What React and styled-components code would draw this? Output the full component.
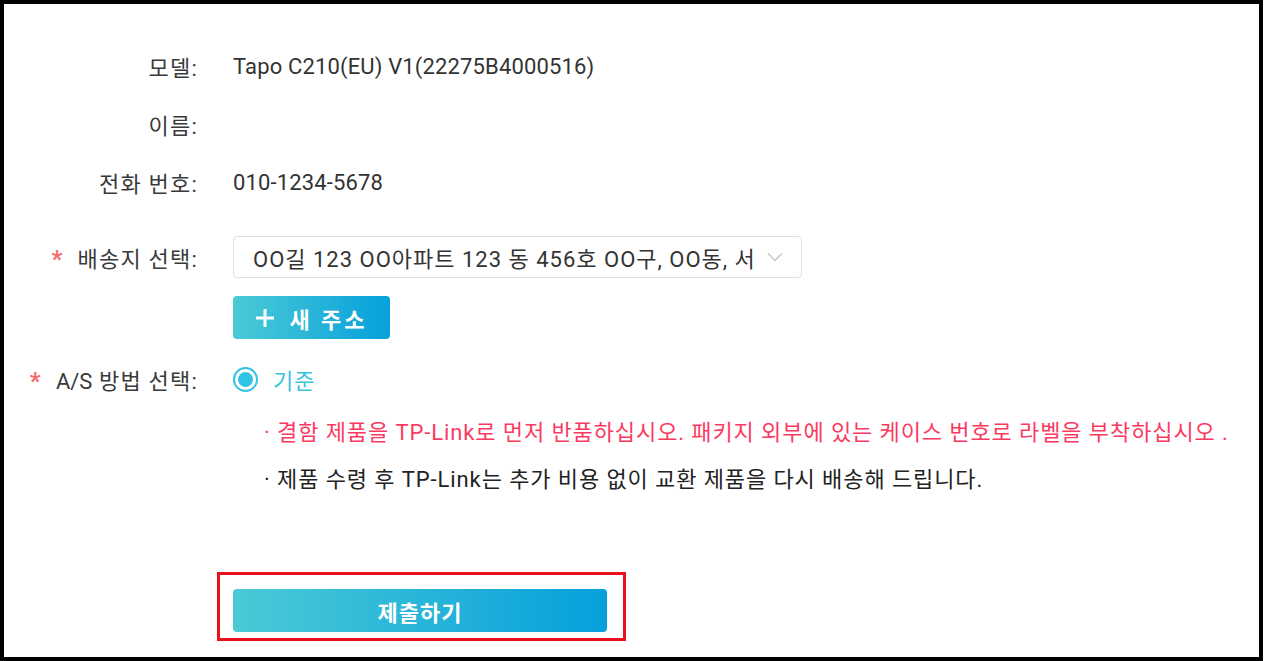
import React from "react";
import styled, { createGlobalStyle } from "styled-components";

const GlobalStyle = createGlobalStyle`
  html, body {
    margin: 0;
    padding: 0;
    background: #ffffff;
  }
  body {
    font-family: Roboto, "Noto Sans CJK KR", sans-serif;
    color: #333333;
  }
  * {
    box-sizing: border-box;
  }
`;

const Frame = styled.div`
  width: 1263px;
  height: 661px;
  border: 4px solid #000000;
  padding-top: 42px;
  display: flex;
  flex-direction: column;
`;

const Row = styled.div`
  display: flex;
  align-items: center;
  min-height: ${(props) => props.height || 40}px;
  margin-top: ${(props) => props.gap || 0}px;
`;

const Label = styled.div`
  width: 194px;
  flex-shrink: 0;
  text-align: right;
  font-size: 22px;
  letter-spacing: 1.2px;
  color: #3a3a3a;
  white-space: nowrap;
`;

const Latin = styled.span`
  letter-spacing: 0;
`;

const Star = styled.span`
  color: #f56c6c;
  font-size: 24px;
  font-weight: 700;
  margin-right: 14px;
`;

const Value = styled.div`
  margin-left: 35px;
  font-size: 22px;
  letter-spacing: 0.15px;
  color: #333333;
  display: flex;
  align-items: center;
`;

const Select = styled.div`
  width: 569px;
  height: 42px;
  border: 1px solid #dcdfe6;
  border-radius: 4px;
  display: flex;
  align-items: center;
  justify-content: space-between;
  padding: 0 18px 0 19px;
  font-size: 22px;
  letter-spacing: 1px;
  color: #333333;
  white-space: nowrap;
`;

const GradientButton = styled.button`
  width: ${(props) => props.width}px;
  height: 43px;
  border: none;
  border-radius: 4px;
  background: linear-gradient(90deg, #4bcad6 0%, #06a0dc 100%);
  color: #ffffff;
  font-family: Roboto, "Noto Sans CJK KR", sans-serif;
  font-size: 22px;
  font-weight: 700;
  display: flex;
  align-items: center;
  justify-content: center;
  gap: 14px;
  letter-spacing: ${(props) => props.spacing || 0}px;
  padding: 0;
`;

const Radio = styled.span`
  width: 25px;
  height: 25px;
  border-radius: 50%;
  border: 2px solid #2fc4e4;
  display: flex;
  align-items: center;
  justify-content: center;

  &::after {
    content: "";
    width: 15px;
    height: 15px;
    border-radius: 50%;
    background: #2fc4e4;
  }
`;

const RadioText = styled.span`
  margin-left: 15px;
  color: #39c2de;
  font-size: 22px;
  letter-spacing: 1px;
`;

const Notes = styled.div`
  margin-left: 260px;
  margin-top: 18px;
  display: flex;
  flex-direction: column;
  gap: 15px;
`;

const Note = styled.div`
  font-size: 22px;
  line-height: 32px;
  letter-spacing: 0.9px;
  color: ${(props) => (props.warn ? "#fb3a62" : "#222222")};
  white-space: nowrap;
`;

const Highlight = styled.div`
  margin-left: 213px;
  margin-top: 76px;
  width: 409px;
  border: 3px solid #e8111d;
  padding: 14px 15px 6px 13px;
`;

export default function App() {
  return (
    <>
      <GlobalStyle />
      <Frame>
        <Row>
          <Label>모델:</Label>
          <Value>Tapo C210(EU) V1(22275B4000516)</Value>
        </Row>
        <Row gap={18}>
          <Label>이름:</Label>
          <Value></Value>
        </Row>
        <Row gap={18}>
          <Label>전화 번호:</Label>
          <Value>010-1234-5678</Value>
        </Row>
        <Row gap={34} height={42}>
          <Label>
            <Star>*</Star>배송지 선택:
          </Label>
          <Value>
            <Select>
              <span>OO길 123 OO아파트 123 동 456호 OO구, OO동, 서</span>
              <svg width="16" height="10" viewBox="0 0 16 10">
                <polyline points="1,1.5 8,8.5 15,1.5" fill="none" stroke="#c0c4cc" strokeWidth="1.3" />
              </svg>
            </Select>
          </Value>
        </Row>
        <Row gap={18} height={43}>
          <Label></Label>
          <Value>
            <GradientButton width={157} spacing={3}>
              <svg width="20" height="20" viewBox="0 0 20 20">
                <path d="M10 1v18M1 10h18" stroke="#ffffff" strokeWidth="3" />
              </svg>
              <span>새 주소</span>
            </GradientButton>
          </Value>
        </Row>
        <Row gap={20}>
          <Label>
            <Star>*</Star>
            <Latin>A/S</Latin> 방법 선택:
          </Label>
          <Value>
            <Radio />
            <RadioText>기준</RadioText>
          </Value>
        </Row>
        <Notes>
          <Note warn>· 결함 제품을 TP-Link로 먼저 반품하십시오. 패키지 외부에 있는 케이스 번호로 라벨을 부착하십시오 .</Note>
          <Note>· 제품 수령 후 TP-Link는 추가 비용 없이 교환 제품을 다시 배송해 드립니다.</Note>
        </Notes>
        <Highlight>
          <GradientButton width={374} spacing={1}>제출하기</GradientButton>
        </Highlight>
      </Frame>
    </>
  );
}
